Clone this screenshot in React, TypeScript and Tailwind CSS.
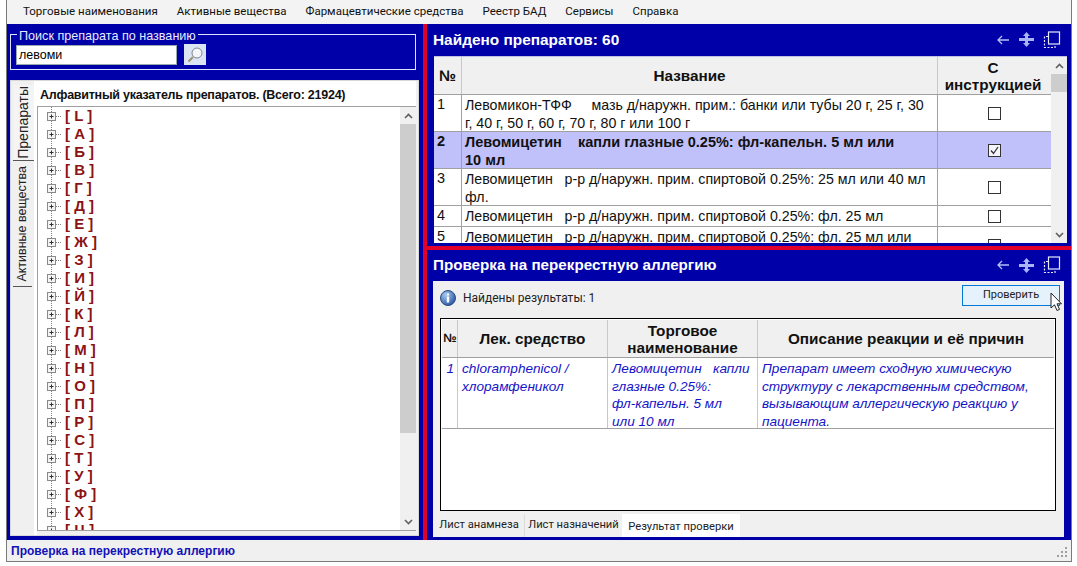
import React from "react";

const letters = ["L","А","Б","В","Г","Д","Е","Ж","З","И","Й","К","Л","М","Н","О","П","Р","С","Т","У","Ф","Х","Ц"];

function Chevron({ up }: { up?: boolean }) {
  return (
    <svg width="9" height="6" viewBox="0 0 9 6">
      <path d={up ? "M1 5 L4.5 1.5 L8 5" : "M1 1 L4.5 4.5 L8 1"} fill="none" stroke="#606060" strokeWidth="1.6" />
    </svg>
  );
}

function Scrollbar({ top, mid }: { top: string; mid: string }) {
  return (
    <div className="w-[16px] shrink-0 bg-[#f0f0f0] flex flex-col items-stretch">
      <div className="h-[17px] shrink-0 flex items-center justify-center"><Chevron up /></div>
      <div className={`${top} shrink-0`} />
      <div className={`${mid} shrink-0 bg-[#cdcdcd]`} />
      <div className="flex-1" />
      <div className="h-[17px] shrink-0 flex items-center justify-center"><Chevron /></div>
    </div>
  );
}

function Expander() {
  return (
    <svg width="20" height="18" viewBox="0 0 20 18" className="shrink-0">
      <path d="M6.5 0V18" stroke="#808080" strokeDasharray="1 1" />
      <path d="M11 9.5H17" stroke="#808080" strokeDasharray="1 1" />
      <rect x="2.5" y="5.5" width="8" height="8" fill="#f4f4f4" stroke="#8a8a8a" />
      <path d="M4.5 9.5H8.5M6.5 7.5V11.5" stroke="#303030" />
    </svg>
  );
}

function CheckBox({ checked }: { checked?: boolean }) {
  return (
    <svg width="13" height="13" viewBox="0 0 13 13">
      <rect x="0.5" y="0.5" width="12" height="12" fill={checked ? "#f4f4fb" : "#fff"} stroke="#333" />
      {checked && <path d="M3 6.5 L5.5 9.5 L10 3" fill="none" stroke="#333" strokeWidth="1.3" />}
    </svg>
  );
}

function TitleIcons() {
  return (
    <div className="flex items-center gap-[8px]">
      <svg width="14" height="12" viewBox="0 0 14 12">
        <path d="M13 6H2M6 2L2 6L6 10" fill="none" stroke="#b4c0f8" strokeWidth="1.3" />
      </svg>
      <svg width="17" height="17" viewBox="0 0 17 17">
        <path d="M8.5 1L5 5H7V7H1V10H7V12H5L8.5 16L12 12H10V10H16V7H10V5H12Z" fill="#a8b4f4" />
      </svg>
      <svg width="18" height="18" viewBox="0 0 18 18">
        <rect x="5.5" y="1" width="11" height="12" fill="none" stroke="#e6e9ff" strokeWidth="1.2" />
        <path d="M5 5.5H1.5V16.5H12V13.5" fill="none" stroke="#e6e9ff" strokeWidth="1.2" strokeDasharray="2 1.5" />
      </svg>
    </div>
  );
}

function Row({ n, text, checked, sel, h }: { n: string; text: string; checked?: boolean; sel?: boolean; h: string }) {
  return (
    <div className={`flex shrink-0 border-b border-[#a0a0a0] ${h} ${sel ? "bg-[#c0c0fa] font-bold" : "bg-white"}`}>
      <div className="w-[28px] shrink-0 border-r border-[#a0a0a0] pl-[3px] leading-[18px] text-[14.5px]">{n}</div>
      <div className={`flex-1 border-r border-[#a0a0a0] pl-[3px] pt-[1px] leading-[18px] whitespace-pre ${sel ? "text-[14.5px]" : "text-[14.2px]"}`}>{text}</div>
      <div className="w-[113px] shrink-0 flex items-center justify-center"><CheckBox checked={checked} /></div>
    </div>
  );
}

export default function App() {
  return (
    <div className="w-[1077px] h-[566px] bg-white overflow-hidden pl-[6px] pr-[5px] [font-family:'Liberation_Sans',Arial,sans-serif] text-black">
      <div className="h-[562px] border-x border-b border-[#7a7a7a] flex flex-col">
        {/* menu */}
        <div className="h-[24px] shrink-0 bg-[#f3f3f3] flex items-center pl-[16px] gap-[19px] text-[11.5px] [font-family:'Roboto',sans-serif] text-[#111]">
          <span>Торговые наименования</span>
          <span>Активные вещества</span>
          <span>Фармацевтические средства</span>
          <span>Реестр БАД</span>
          <span>Сервисы</span>
          <span>Справка</span>
        </div>

        <div className="flex-1 min-h-0 flex bg-[#0000a8]">
          {/* left */}
          <div className="w-[412px] shrink-0 pl-[3px] pt-[10px] pb-[4px] flex flex-col">
            <div className="relative h-[36px] shrink-0 border border-[#dfe3ff] mr-[3px] pl-[5px] pt-[10px] flex items-start gap-[7px]">
              <span className="absolute left-[6px] -top-[6px] bg-[#0000a8] px-[2px] text-[12.6px] leading-[14px] text-[#e8ebff]">Поиск препарата по названию</span>
              <div className="w-[161px] h-[20px] bg-white border border-[#9aa] pl-[2px] text-[12.5px] leading-[19px]">левоми</div>
              <button className="w-[22px] h-[21px] -mt-[1px] bg-[#dbe4f2] flex items-center justify-center">
                <svg width="18" height="18" viewBox="0 0 18 18">
                  <circle cx="11" cy="7" r="5" fill="#f4f6fa" stroke="#7e8791" />
                  <path d="M7 11L2.5 15.5" stroke="#9a9074" strokeWidth="2" />
                </svg>
              </button>
            </div>

            <div className="flex-1 min-h-0 mt-[10px] flex bg-[#f0f0f0] border border-[#d8d8d8] pr-[2px]">
              {/* vertical tabs */}
              <div className="w-[23px] shrink-0 flex flex-col items-end pt-[4px] text-[12.5px] text-[#222]">
                <div className="w-[21px] h-[76px] bg-[#f4f4f4] border-b border-[#555] flex items-center justify-center">
                  <span className="[writing-mode:vertical-rl] rotate-180 text-[14px]">Препараты</span>
                </div>
                <div className="w-[19px] h-[126px] bg-[#f0f0f0] border-b border-[#555] flex items-center justify-center mr-[2px]">
                  <span className="[writing-mode:vertical-rl] rotate-180">Активные вещества</span>
                </div>
              </div>
              <div className="flex-1 min-w-0 bg-white flex flex-col pl-[3px]">
                <div className="h-[25px] shrink-0 pl-[3px] pt-[7px] text-[12.5px] leading-[15px] font-bold tracking-[-0.25px] text-[#111]">Алфавитный указатель препаратов. (Всего: 21924)</div>
                <div className="flex-1 min-h-0 flex border-t border-l border-b border-[#a0a0a0]">
                  <div className="flex-1 min-w-0 overflow-hidden pl-[7px]">
                    {letters.map((l, i) => (
                      <div key={i} className="h-[18px] flex items-center">
                        <Expander />
                        <span className="text-[15px] font-bold text-[#8b1414] whitespace-pre">{`[ ${l} ]`}</span>
                      </div>
                    ))}
                  </div>
                  <Scrollbar top="h-0" mid="h-[309px]" />
                </div>
                <div className="h-[4px] shrink-0 bg-[#f0f0f0]" />
              </div>
            </div>
          </div>

          {/* vertical splitter */}
          <div className="w-[4px] shrink-0" />
          <div className="w-[4px] shrink-0 bg-[#e0002a]" />

          {/* right */}
          <div className="flex-1 min-w-0 flex flex-col">
            <div className="h-[222px] shrink-0 flex flex-col pl-[7px] pr-[4px]">
              <div className="h-[32px] shrink-0 flex items-center justify-between pr-[6px] pb-[1px] -ml-[1px] text-white text-[15.4px] font-bold">
                <span>Найдено препаратов: 60</span>
                <TitleIcons />
              </div>
              <div className="h-[187px] shrink-0 flex bg-white border-t border-[#c0c0e0] overflow-hidden">
                <div className="flex-1 min-w-0 flex flex-col overflow-hidden text-[#111]">
                  <div className="h-[38px] shrink-0 flex bg-[#f0f0f0] border-b border-[#a0a0a0] font-bold text-[15.3px] leading-[17px] text-center">
                    <div className="w-[28px] shrink-0 border-r border-[#c8c8c8] flex items-center justify-center">№</div>
                    <div className="flex-1 border-r border-[#c8c8c8] flex items-center justify-center pr-[20px]">Название</div>
                    <div className="w-[113px] shrink-0 flex items-center justify-center pr-[3px]">С<br />инструкцией</div>
                  </div>
                  <Row n="1" h="h-[37px]" text={"Левомикон-ТФФ     мазь д/наружн. прим.: банки или тубы 20 г, 25 г, 30\nг, 40 г, 50 г, 60 г, 70 г, 80 г или 100 г"} />
                  <Row n="2" h="h-[37px]" sel checked text={"Левомицетин    капли глазные 0.25%: фл-капельн. 5 мл или\n10 мл"} />
                  <Row n="3" h="h-[37px]" text={"Левомицетин   р-р д/наружн. прим. спиртовой 0.25%: 25 мл или 40 мл\nфл."} />
                  <Row n="4" h="h-[21px]" text={"Левомицетин   р-р д/наружн. прим. спиртовой 0.25%: фл. 25 мл"} />
                  <Row n="5" h="h-[37px]" text={"Левомицетин   р-р д/наружн. прим. спиртовой 0.25%: фл. 25 мл или"} />
                </div>
                <Scrollbar top="h-0" mid="h-[18px]" />
              </div>
            </div>

            <div className="h-[4px] shrink-0 bg-[#e0002a]" />

            <div className="flex-1 min-h-0 flex flex-col pl-[6px] pr-[7px]">
              <div className="h-[31px] shrink-0 flex items-center justify-between pr-[3px] pb-[1px] text-white text-[15.2px] font-bold">
                <span>Проверка на перекрестную аллергию</span>
                <TitleIcons />
              </div>
              <div className="flex-1 min-h-0 bg-[#f0f0f0] flex flex-col">
                <div className="h-[37px] shrink-0 flex items-start justify-between pl-[7px] pr-[4px] relative">
                  <div className="flex items-center gap-[7px] mt-[8px] text-[12px] [font-family:'Roboto',sans-serif] text-[#222]">
                    <svg width="16" height="16" viewBox="0 0 16 16">
                      <defs>
                        <radialGradient id="ig" cx="0.35" cy="0.3" r="0.8">
                          <stop offset="0" stopColor="#a8c8f0" />
                          <stop offset="1" stopColor="#1e4f9e" />
                        </radialGradient>
                      </defs>
                      <circle cx="8" cy="8" r="7.5" fill="url(#ig)" stroke="#2a4a80" />
                      <circle cx="8" cy="4.5" r="1.2" fill="#fff" />
                      <rect x="6.8" y="6.5" width="2.4" height="6" fill="#fff" />
                    </svg>
                    <span>Найдены результаты: 1</span>
                  </div>
                  <button className="w-[98px] h-[21px] mt-[4px] bg-[#e5f1fb] border border-[#0078d7] text-[11px] [font-family:'Roboto',sans-serif] text-[#222]">Проверить</button>
                  <svg width="14" height="21" viewBox="0 0 14 21" className="absolute right-0 top-[11px]">
                    <path d="M1 1V16L4.5 12.8L7 18.5L9.5 17.4L7 11.8H11.5Z" fill="#fff" stroke="#222" strokeWidth="1" />
                  </svg>
                </div>
                <div className="flex-1 min-h-0 ml-[7px] mr-[8px] border border-black bg-white p-[1px] flex flex-col">
                  <div className="h-[38px] shrink-0 flex bg-[#f0f0f0] border-b border-[#a0a0a0] font-bold text-[15.3px] leading-[17px] text-center text-[#111]">
                    <div className="w-[16px] shrink-0 border-r border-[#c8c8c8] flex items-center justify-center text-[12px] tracking-[-1px]">№</div>
                    <div className="w-[150px] shrink-0 border-r border-[#c8c8c8] flex items-center justify-center">Лек. средство</div>
                    <div className="w-[150px] shrink-0 border-r border-[#c8c8c8] flex items-center justify-center">Торговое<br />наименование</div>
                    <div className="flex-1 flex items-center justify-center">Описание реакции и её причин</div>
                  </div>
                  <div className="h-[71px] shrink-0 flex border-b border-[#a0a0a0] italic text-[13.6px] leading-[17.5px] text-[#1414c8] [&>div]:pt-[2px]">
                    <div className="w-[16px] shrink-0 border-r border-[#c8c8c8] text-right pr-[3px]">1</div>
                    <div className="w-[150px] shrink-0 border-r border-[#c8c8c8] pl-[4px] whitespace-pre">{"chloramphenicol /\nхлорамфеникол"}</div>
                    <div className="w-[150px] shrink-0 border-r border-[#c8c8c8] pl-[4px] whitespace-pre">{"Левомицетин   капли\nглазные 0.25%:\nфл-капельн. 5 мл\nили 10 мл"}</div>
                    <div className="flex-1 pl-[4px] whitespace-pre">{"Препарат имеет сходную химическую\nструктуру с лекарственным средством,\nвызывающим аллергическую реакцию у\nпациента."}</div>
                  </div>
                </div>
                <div className="h-[26px] shrink-0 flex items-stretch pl-[1px] pt-[3px] text-[11.2px] [font-family:'Roboto',sans-serif] whitespace-nowrap text-[#222]">
                  <div className="w-[91px] flex items-center justify-center border-r border-[#dcdcdc]">Лист анамнеза</div>
                  <div className="w-[97px] flex items-center justify-center">Лист назначений</div>
                  <div className="w-[118px] flex items-center justify-center pt-[3px] bg-white">Результат проверки</div>
                </div>
              </div>
              <div className="h-[3px] shrink-0" />
            </div>
          </div>
        </div>

        {/* status */}
        <div className="h-[21px] shrink-0 bg-[#f0f0f0] flex items-center justify-between pl-[4px] pr-[2px]">
          <span className="text-[12px] font-bold text-[#1212b8]">Проверка на перекрестную аллергию</span>
          <svg width="12" height="12" viewBox="0 0 12 12" className="self-end mb-[2px]">
            <g fill="#a0a0a0">
              <rect x="8" y="0" width="2" height="2" />
              <rect x="4" y="4" width="2" height="2" />
              <rect x="8" y="4" width="2" height="2" />
              <rect x="0" y="8" width="2" height="2" />
              <rect x="4" y="8" width="2" height="2" />
              <rect x="8" y="8" width="2" height="2" />
            </g>
          </svg>
        </div>
      </div>
    </div>
  );
}
